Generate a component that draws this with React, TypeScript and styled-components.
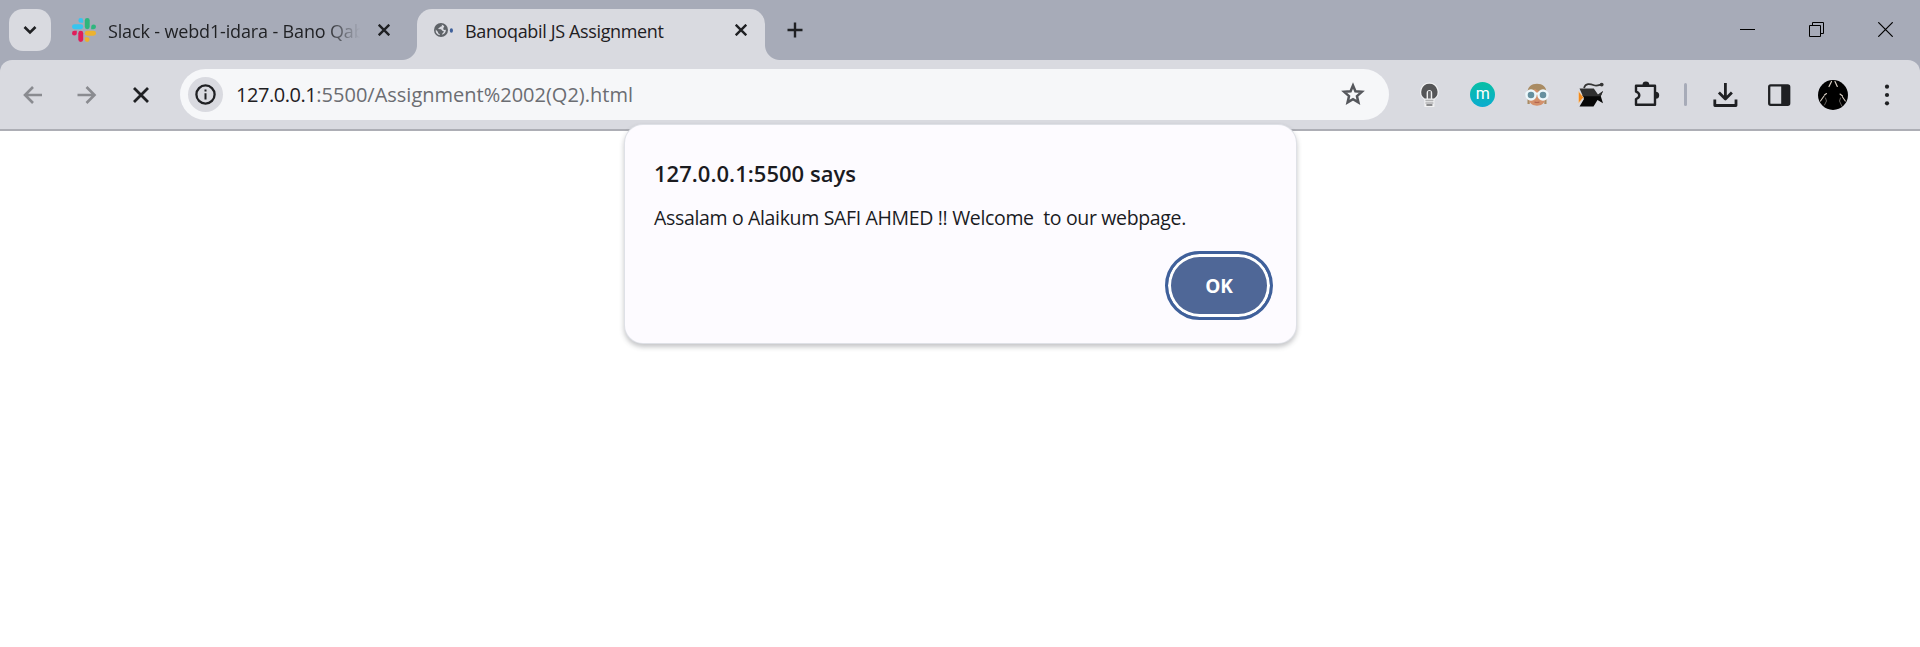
import React from "react";
import styled, { createGlobalStyle } from "styled-components";

const GlobalStyle = createGlobalStyle`
  * { box-sizing: border-box; }
  html, body { margin: 0; background: #fff; overflow: hidden; }
  button { font: inherit; color: inherit; border: 0; padding: 0; background: none; }
  svg { display: block; flex: none; }
`;

const Browser = styled.div`
  width: 1920px;
  height: 647px;
  display: flex;
  flex-direction: column;
  background: #fff;
  color: #1f2023;
  font-family: "Open Sans", "Noto Sans", sans-serif;
`;

const Label = styled.span<{ $size: number; $spacing: number }>`
  font-size: ${(p) => p.$size}px;
  letter-spacing: ${(p) => p.$spacing}px;
  line-height: 26px;
  white-space: pre;
`;

const TabStrip = styled.header`
  height: 60px;
  display: flex;
  background: #a7abb8;
`;

const TabSearch = styled.button`
  width: 42px;
  height: 42px;
  margin: 9px 0 0 9px;
  display: grid;
  place-items: center;
  border-radius: 14px;
  background: #d9dae0;
`;

const Tab = styled.div<{ $active?: boolean }>`
  position: relative;
  width: ${(p) => (p.$active ? 348 : 366)}px;
  height: 51px;
  margin-top: 9px;
  padding: 0 15px 9px ${(p) => (p.$active ? 16 : 21)}px;
  display: flex;
  align-items: center;
  border-radius: 15px 15px 0 0;
  background: ${(p) => (p.$active ? "#d9dae0" : "transparent")};
`;

const Flare = styled.i<{ $side: "left" | "right" }>`
  position: absolute;
  bottom: 0;
  ${(p) => p.$side}: -15px;
  width: 15px;
  height: 15px;
  background: radial-gradient(
    circle at ${(p) => (p.$side === "left" ? "0 0" : "100% 0")},
    transparent 14.5px,
    #d9dae0 15.5px
  );
`;

const TabTitle = styled.div<{ $indent: number; $width: number; $fade?: boolean }>`
  width: ${(p) => p.$width}px;
  margin: 2px 0 0 ${(p) => p.$indent}px;
  display: flex;
  ${(p) => p.$fade && "mask-image: linear-gradient(90deg, #000 86%, transparent);"}
`;

const CloseTab = styled.button<{ $gap: number }>`
  margin-left: ${(p) => p.$gap}px;
`;

const NewTab = styled.button`
  margin: 0 0 0 22px;
`;

const WindowControls = styled.div`
  margin: 22px 27px 0 auto;
  display: flex;
  gap: 54px;
`;

const ToolbarBack = styled.div`
  background: #a7abb8;
`;

const Toolbar = styled.nav`
  height: 71px;
  padding: 9px 18px 0 21px;
  display: flex;
  align-items: flex-start;
  border-radius: 12px 12px 0 0;
  border-bottom: 2px solid #adaeb5;
  background: #d9dae0;
`;

const NavGroup = styled.div`
  height: 51px;
  width: 159px;
  display: flex;
  align-items: center;
  gap: 30px;
`;

const AddressBar = styled.div`
  width: 1209px;
  height: 51px;
  padding: 0 23px 0 8px;
  display: flex;
  align-items: center;
  border-radius: 26px;
  background: #f6f7f9;
`;

const SiteInfo = styled.span`
  width: 35px;
  height: 35px;
  margin-right: 13px;
  display: grid;
  place-items: center;
  border-radius: 50%;
  background: #d9dae0;
`;

const Url = styled.div`
  flex: 1;
  color: #6b6d72;
  b { font-weight: 400; letter-spacing: -0.45px; color: #1f2023; }
`;

const Extensions = styled.div`
  height: 51px;
  margin-left: auto;
  display: flex;
  align-items: center;
  gap: 24.1px;
`;

const Divider = styled.i`
  width: 3px;
  height: 23px;
  margin: 0 -1px;
  border-radius: 2px;
  background: #a7abb8;
`;

const MetaBadge = styled.span`
  width: 25px;
  height: 25px;
  margin: 0 3px 0 2px;
  display: grid;
  place-items: center;
  border-radius: 50%;
  background: linear-gradient(#08bfa4, #0bacd0);
  color: #fff;
  font: 16px/20px Roboto, sans-serif;
  padding-bottom: 2px;
`;

const Dialog = styled.section`
  position: absolute;
  left: 625px;
  top: 125px;
  width: 671px;
  height: 218px;
  padding: 35px 23px 0 29px;
  display: flex;
  flex-direction: column;
  border-radius: 18px;
  background: #fdfbff;
  box-shadow: 0 0 0 1px #dfe1e7, 0 3px 5px 1px rgba(60, 62, 70, 0.3);
`;

const DialogTitle = styled.h1`
  height: 26px;
  margin: 0 0 19px;
  font-weight: 600;
  display: flex;
  color: #1b1b1f;
`;

const DialogText = styled.p`
  height: 26px;
  margin: 0;
  display: flex;
  color: #1b1b1f;
`;

const OkButton = styled.button`
  width: 108px;
  height: 69px;
  margin: 20px 0 0 auto;
  border: 3px solid #3f609b;
  border-radius: 35px;
  box-shadow: inset 0 0 0 3px #fff;
  background: #4f6797;
  color: #fff;
  font-weight: 700;
`;

const Cross = ({ size = 12, width = 2.4 }: { size?: number; width?: number }) => (
  <svg width={size} height={size} viewBox="0 0 12 12" stroke="#1f2023" strokeWidth={width}>
    <path d="M.7.7l10.6 10.6M11.3.7L.7 11.3" />
  </svg>
);

const SlackLogo = () => (
  <svg width="24" height="24" viewBox="0 0 24 24">
    <g fill="#36c5f0"><path d="M8.8 0a2.4 2.4 0 0 1 2.4 2.4v2.4H8.8a2.4 2.4 0 0 1 0-4.8z" /><rect y="6.3" width="11.2" height="4.9" rx="2.45" /></g>
    <g fill="#2eb67d"><rect x="12.8" width="4.9" height="11.2" rx="2.45" /><path d="M24 8.8a2.4 2.4 0 0 1-2.4 2.4h-2.4V8.8a2.4 2.4 0 0 1 4.8 0z" /></g>
    <g fill="#ecb22e"><rect x="12.8" y="12.8" width="11.2" height="4.9" rx="2.45" /><path d="M15.2 24a2.4 2.4 0 0 1-2.4-2.4v-2.4h2.4a2.4 2.4 0 0 1 0 4.8z" /></g>
    <g fill="#e01e5a"><rect x="6.3" y="12.8" width="4.9" height="11.2" rx="2.45" /><path d="M0 15.2a2.4 2.4 0 0 1 2.4-2.4h2.4v2.4a2.4 2.4 0 0 1-4.8 0z" /></g>
  </svg>
);

const LoadingGlobe = () => (
  <svg width="22" height="16" viewBox="0 0 22 16">
    <circle cx="8" cy="8" r="7" fill="#5f6368" />
    <path d="M8.6 2.6c.8 1 .2 2.2-1.3 2.1-.8.1-.7 1.4-1.6 1.6l-.8.8 3 .1c1.1.3 1 1.6 2.1 1.8 1.2.2 1 1.3 0 1.8-.8.5-.7 1.2-1.1 1.9a5.2 5.2 0 0 0 4-5l-1.3.2c-1.2 0-1.5-1-1.2-2l.9-1.6a5.4 5.4 0 0 0-2.7-1.7zM2.7 7.5a5.4 5.4 0 0 0 4 5.7v-1.2c-1.4-.4-1.7-1.2-1.7-2.1z" fill="#d9dae0" />
    <ellipse cx="18.4" cy="8.5" rx="1.6" ry="2.3" fill="#3f609b" />
  </svg>
);

const Arrow = ({ flip }: { flip?: boolean }) => (
  <svg width="24" height="24" viewBox="0 0 24 24" fill="none" stroke="#8a8b90" strokeWidth="2.6">
    <path d={flip ? "M2.5 12H19M11.5 4l8 8-8 8" : "M21 12H4.5M12 4l-8 8 8 8"} />
  </svg>
);

const Star = () => (
  <svg width="26" height="26" viewBox="0 0 24 24" fill="none" stroke="#55575c" strokeWidth="2.3" strokeLinejoin="miter">
    <path d="M12 3.2l2.25 5.4 5.9.5-4.5 3.9 1.35 5.8L12 15.8l-5 3 1.35-5.8-4.5-3.9 5.9-.5z" />
  </svg>
);

const Bulb = () => (
  <svg width="30" height="30" viewBox="0 0 30 30">
    <path d="M15.4 3a8.8 8.8 0 0 0-5.2 15.8c.8.7.8 1.4.8 2.2v5.5h8.8V21c0-.8 0-1.5.8-2.2A8.8 8.8 0 0 0 15.4 3z" fill="#eeeeef" stroke="#f2f2f3" strokeWidth="1.2" />
    <path d="M15.4 3.8a8.1 8.1 0 0 0-4.7 14.7h1.9v-5.6c0-3.8 5.6-3.8 5.6 0v5.6h1.9a8.1 8.1 0 0 0-4.7-14.7z" fill="#555557" />
    <path d="M14 11.5c0-.8 2.8-.8 2.8 0v7H14z" fill="#68686a" />
    <path d="M11.4 20.5h8M11.4 23h8" stroke="#b3b3b5" strokeWidth="1.3" />
    <path d="M12.4 25h6" stroke="#69696b" strokeWidth="1.5" />
  </svg>
);

const Face = () => (
  <svg width="30" height="30" viewBox="0 0 30 30">
    <path d="M5.5 24V13c0-6.5 4-9.3 9.5-9.3s9.5 2.8 9.5 9.3v11h-2.2V12H7.7v12z" fill="#a98b63" />
    <path d="M6.5 13c3-1 4.5-2.7 6.5-4 2.5 2 6.5 3 10.5 4L23 20c-1 3.8-4 5.7-8 5.7S8 23.8 7 20z" fill="#d4906b" />
    <path d="M12.5 22q2.5 1 5 0" stroke="#b3644f" strokeWidth="1.1" fill="none" />
    <path d="M3.5 13.6h23" stroke="#eff7fb" strokeWidth="2.2" />
    <g fill="#66909f" stroke="#edf7fb" strokeWidth="2.4"><circle cx="9" cy="15" r="4.5" /><circle cx="21" cy="15" r="4.5" /></g>
  </svg>
);

const Fish = () => (
  <svg width="30" height="30" viewBox="0 0 30 30">
    <g transform="translate(-1 0)">
      <path d="M7 15h16l5-4-2.2 5.3 2.2 7-5.5-3.4-4 6.6H4.5L9 19z" fill="#080808" />
      <path d="M4.5 8.5h14.3l4.2 6 5-3.5-2.4 5.3H8z" fill="#303030" />
      <path d="M3.5 11l5 6.5-5 5.7z" fill="#f28a1c" stroke="#eed6bb" strokeWidth=".6" />
      <path d="M9 8c1.5-5 6-4.2 10-2.8 3.2 1.1 5.3-.4 7.5-.9" fill="none" stroke="#353535" strokeWidth="1.7" />
      <circle cx="26.7" cy="4.6" r="1.9" fill="#353535" />
    </g>
  </svg>
);

const Puzzle = () => (
  <svg width="30" height="30" viewBox="0 0 30 30">
    <path d="M5 5.7h19v19H5v-5.6c4.4-1.5 4.4-6 0-7.5z" fill="none" stroke="#1f2023" strokeWidth="2.4" strokeLinejoin="round" />
    <path d="M11.5 5a3.3 3.3 0 0 1 6.8 0zM24.7 11.8a3.4 3.4 0 0 1 0 7z" fill="#1f2023" />
  </svg>
);

const Download = () => (
  <svg width="30" height="30" viewBox="0 0 30 30" fill="none" stroke="#1f2023" strokeWidth="2.8">
    <path d="M15.4 3v15M8.9 12.4l6.5 6.5 6.5-6.5M4.8 19.5v6H26v-6" strokeLinejoin="round" />
  </svg>
);

const SidePanel = () => (
  <svg width="30" height="30" viewBox="0 0 30 30">
    <rect x="5.2" y="5.3" width="20" height="19.5" rx="1.5" fill="none" stroke="#1f2023" strokeWidth="2.3" />
    <path d="M17.2 5h8v20h-8z" fill="#1f2023" />
  </svg>
);

const Avatar = () => (
  <svg width="30" height="30" viewBox="0 0 30 30">
    <circle cx="15" cy="15" r="15" fill="#000" />
    <g fill="none" stroke="#d8cec3" strokeLinecap="round">
      <path d="M13.5 1.5L11 6.5M17 1.5l2.3 5" strokeWidth="1.2" />
      <path d="M8.5 13.5l-2 1.5M6 16l-3.5 5M22 14l2.5 2M24.5 17l2.8 4" strokeWidth="1.1" />
      <path d="M7.5 18l1 3-2 4M22.5 18l-1 3 2.3 5" strokeWidth=".7" stroke="#928c86" />
    </g>
  </svg>
);

const Menu = () => (
  <svg width="30" height="30" viewBox="0 0 30 30" fill="#1f2023">
    <circle cx="15" cy="6.7" r="2.1" /><circle cx="15" cy="15" r="2.1" /><circle cx="15" cy="23.3" r="2.1" />
  </svg>
);

export default function App() {
  return (
    <Browser>
      <GlobalStyle />
      <TabStrip>
        <TabSearch aria-label="Search tabs">
          <svg width="14" height="10" viewBox="0 0 14 10" fill="none" stroke="#1f2023" strokeWidth="2.6">
            <path d="M1.5 2L7 7.5 12.5 2" />
          </svg>
        </TabSearch>
        <Tab>
          <SlackLogo />
          <TabTitle $indent={12} $width={252} $fade>
            <Label $size={18} $spacing={-0.15}>Slack - webd1-idara - Bano Qab</Label>
          </TabTitle>
          <CloseTab $gap={18} aria-label="Close tab"><Cross /></CloseTab>
        </Tab>
        <Tab $active>
          <Flare $side="left" />
          <Flare $side="right" />
          <LoadingGlobe />
          <TabTitle $indent={10} $width={255}>
            <Label $size={18} $spacing={-0.36}>Banoqabil JS Assignment</Label>
          </TabTitle>
          <CloseTab $gap={15} aria-label="Close tab"><Cross /></CloseTab>
        </Tab>
        <NewTab aria-label="New tab">
          <svg width="16" height="16" viewBox="0 0 16 16" stroke="#1f2023" strokeWidth="2.4"><path d="M8 .5v15M.5 8h15" /></svg>
        </NewTab>
        <WindowControls>
          <svg width="15" height="15" viewBox="0 0 15 15" fill="#000"><path d="M0 7h15v1H0z" /></svg>
          <svg width="15" height="15" viewBox="0 0 15 15" fill="none" stroke="#000"><path d="M.5 3.5h11v11H.5zM3.5 3.5v-3h11v11h-3" /></svg>
          <svg width="15" height="15" viewBox="0 0 15 15" stroke="#000" strokeWidth="1.2"><path d="M.3.3l14.4 14.4M14.7.3L.3 14.7" /></svg>
        </WindowControls>
      </TabStrip>
      <ToolbarBack>
        <Toolbar>
          <NavGroup>
            <Arrow />
            <Arrow flip />
            <svg width="24" height="24" viewBox="0 0 24 24" stroke="#1f2023" strokeWidth="2.8"><path d="M5 5l14 14M19 5L5 19" /></svg>
          </NavGroup>
          <AddressBar>
            <SiteInfo>
              <svg width="21" height="21" viewBox="0 0 21 21"><circle cx="10.5" cy="10.5" r="9.1" fill="none" stroke="#1f2023" strokeWidth="2.3" /><path d="M9.5 9.2h2v6.2h-2zM9.5 5.5h2v2h-2z" fill="#1f2023" /></svg>
            </SiteInfo>
            <Url><Label $size={20} $spacing={0}><b>127.0.0.1</b>:5500/Assignment%2002(Q2).html</Label></Url>
            <Star />
          </AddressBar>
          <Extensions>
            <Bulb />
            <MetaBadge>m</MetaBadge>
            <Face />
            <Fish />
            <Puzzle />
            <Divider />
            <Download />
            <SidePanel />
            <Avatar />
            <Menu />
          </Extensions>
        </Toolbar>
      </ToolbarBack>
      <Dialog role="alertdialog">
        <DialogTitle><Label $size={22} $spacing={0.02}>127.0.0.1:5500 says</Label></DialogTitle>
        <DialogText><Label $size={19.5} $spacing={-0.34}>Assalam o Alaikum SAFI AHMED !! Welcome  to our webpage.</Label></DialogText>
        <OkButton><Label $size={19} $spacing={-0.2}>OK</Label></OkButton>
      </Dialog>
    </Browser>
  );
}
